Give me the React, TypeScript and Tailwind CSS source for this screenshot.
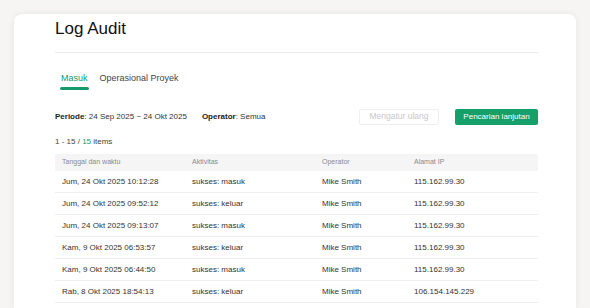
import React from 'react';

interface LogRow {
  time: string;
  activity: string;
  operator: string;
  ip: string;
}

const rows: LogRow[] = [
  { time: 'Jum, 24 Okt 2025 10:12:28', activity: 'sukses: masuk', operator: 'Mike Smith', ip: '115.162.99.30' },
  { time: 'Jum, 24 Okt 2025 09:52:12', activity: 'sukses: keluar', operator: 'Mike Smith', ip: '115.162.99.30' },
  { time: 'Jum, 24 Okt 2025 09:13:07', activity: 'sukses: masuk', operator: 'Mike Smith', ip: '115.162.99.30' },
  { time: 'Kam, 9 Okt 2025 06:53:57', activity: 'sukses: keluar', operator: 'Mike Smith', ip: '115.162.99.30' },
  { time: 'Kam, 9 Okt 2025 06:44:50', activity: 'sukses: masuk', operator: 'Mike Smith', ip: '115.162.99.30' },
  { time: 'Rab, 8 Okt 2025 18:54:13', activity: 'sukses: keluar', operator: 'Mike Smith', ip: '106.154.145.229' },
];

const App: React.FC = () => {
  return (
    <div
      className="w-[590px] h-[308px] overflow-hidden bg-[#f6f5f3] pt-[14px] px-[14px]"
      style={{ fontFamily: '"Liberation Sans", Arial, sans-serif' }}
    >
      <div className="h-full bg-white rounded-t-[8px] shadow-[0_0_6px_rgba(0,0,0,0.07)] pl-[41px] pr-[38px] pt-[5px]">
        <h1 className="text-[17px] leading-[20px] font-medium text-[#111]">Log Audit</h1>
        <div className="mt-[13px] h-px bg-[#ebebeb]" />

        {/* tabs */}
        <div className="flex items-end mt-[19px] text-[9px] leading-[12px]">
          <div className="flex flex-col ml-[5px]">
            <span className="px-[1px] text-[#14996b]">Masuk</span>
            <div className="mt-[3px] h-[2.5px] rounded-full bg-[#14996b]" />
          </div>
          <div className="flex flex-col ml-[11px]">
            <span className="text-[#444]">Operasional Proyek</span>
            <div className="mt-[3px] h-[2.5px]" />
          </div>
        </div>

        {/* filters */}
        <div className="flex items-center mt-[19px] h-[16px] text-[8px] text-[#333]">
          <span>
            <span className="font-bold text-[#222]">Periode</span>: 24 Sep 2025 ~ 24 Okt 2025
          </span>
          <span className="ml-[15px]">
            <span className="font-bold text-[#222]">Operator</span>: Semua
          </span>
          <div className="ml-auto flex gap-[16px]">
            <button className="w-[80px] h-[16px] border border-[#efefef] rounded-[2px] text-[8.5px] text-[#c8c8c8]">
              Mengatur ulang
            </button>
            <button className="w-[83px] h-[16px] rounded-[2px] bg-[#15a06a] text-[8px] text-white">
              Pencarian lanjutan
            </button>
          </div>
        </div>

        <p className="mt-[12px] text-[8px] leading-[10px] text-[#444]">
          1 - 15 / <span className="text-[#14996b]">15</span> items
        </p>

        {/* table */}
        <div className="mt-[7px] text-[8px]">
          <div className="flex items-center h-[17px] bg-[#f5f5f5] text-[7px] text-[#8a8a8a]">
            <div className="w-[137px] pl-[7px]">Tanggal dan waktu</div>
            <div className="w-[130px]">Aktivitas</div>
            <div className="w-[92px]">Operator</div>
            <div>Alamat IP</div>
          </div>
          {rows.map((r, i) => (
            <div key={i} className="flex items-center h-[22px] pt-[1px] border-b border-[#eeeeee] text-[#333]">
              <div className="w-[137px] pl-[7px]">{r.time}</div>
              <div className="w-[130px]">{r.activity}</div>
              <div className="w-[92px]">{r.operator}</div>
              <div>{r.ip}</div>
            </div>
          ))}
        </div>
      </div>
    </div>
  );
};

export default App;
